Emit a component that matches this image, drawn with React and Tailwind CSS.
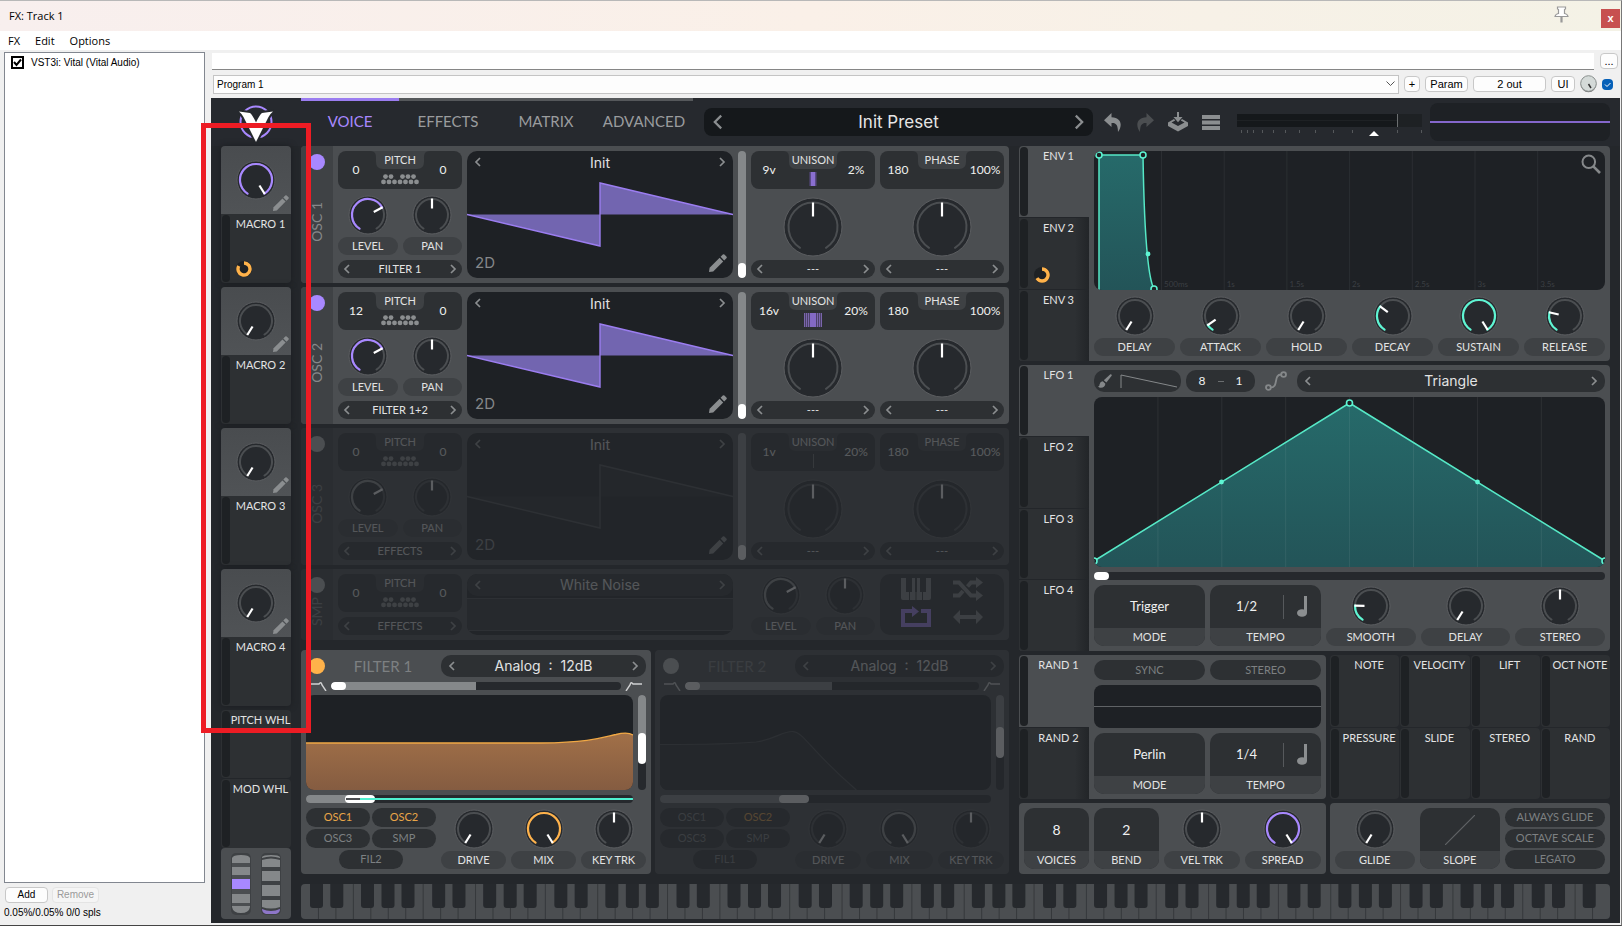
import React from "react";

const PURPLE = "#a888ff";
const TEAL = "#5ef5d3";
const ORANGE = "#ffb24a";

/* ---------- drawing helpers ---------- */

function polar(c, r, deg) {
  const a = (deg * Math.PI) / 180;
  return [c + r * Math.sin(a), c - r * Math.cos(a)];
}

function arc(c, r, from, to) {
  const [x1, y1] = polar(c, r, from);
  const [x2, y2] = polar(c, r, to);
  return `M${x1} ${y1}A${r} ${r} 0 ${to - from > 180 ? 1 : 0} 1 ${x2} ${y2}`;
}

function KnobFace({ value = 0, color, large }) {
  const size = large ? 60 : 40;
  const c = size / 2;
  const r = large ? 24.5 : 16;
  const angle = -148 + 296 * value;
  const [x1, y1] = polar(c, large ? 10.5 : 6.5, angle);
  const [x2, y2] = polar(c, large ? 24.5 : 16.5, angle);
  return (
    <svg width={size} height={size} viewBox={`0 0 ${size} ${size}`} className="shrink-0">
      <circle cx={c} cy={c} r={large ? 29 : 19} fill="#26292d" stroke="#5b5d60" strokeWidth="1" />
      <path d={arc(c, r, -148, 148)} fill="none" stroke="#4b4e51" strokeWidth="2" strokeLinecap="round" />
      {color && value > 0 && (
        <path d={arc(c, r, -148, angle)} fill="none" stroke={color} strokeWidth="2.2" strokeLinecap="round" />
      )}
      <path d={`M${x1} ${y1}L${x2} ${y2}`} stroke="#fff" strokeWidth="2.2" />
    </svg>
  );
}

function Pencil({ size = 18 }) {
  return (
    <svg width={size} height={size} viewBox="0 0 18 18" fill="#8b8e90">
      <path d="M0 18L.6 13.8 10.6 3.8 14.2 7.4 4.2 17.4Z" />
      <path d="M11.6 2.8L13.8.6Q14.6-.2 15.4.6L17.4 2.6Q18.2 3.4 17.4 4.2L15.2 6.4Z" />
    </svg>
  );
}

function Chevron({ dir, big }) {
  const s = big ? 16 : 10;
  return (
    <svg width={s} height={s} viewBox="0 0 10 10" fill="none" stroke="#8b8e90" strokeWidth={big ? 1.4 : 1.7}>
      <path d={dir === "left" ? "M7 1L3 5L7 9" : "M3 1L7 5L3 9"} />
    </svg>
  );
}

function Ring({ sweep }) {
  return (
    <svg width="16" height="16" viewBox="0 0 16 16">
      <circle cx="8" cy="8" r="8" fill="#1e2124" />
      <path d={arc(8, 6, 0, sweep)} fill="none" stroke={ORANGE} strokeWidth="3.4" />
    </svg>
  );
}

function Note() {
  return (
    <svg width="11" height="21" viewBox="0 0 11 21" fill="#8b8e90">
      <ellipse cx="5" cy="17" rx="5" ry="3.8" />
      <path d="M7 0h3v17H7z" />
    </svg>
  );
}

function PianoDots() {
  const top = [4.5, 10, 21.5, 27, 32.5];
  const bottom = [2, 7.5, 13, 18.5, 24, 29.5, 35];
  return (
    <svg width="38" height="11" viewBox="0 0 38 11" fill="#8b8e90">
      {top.map((x) => (
        <circle key={x} cx={x} cy="2.6" r="2.4" />
      ))}
      {bottom.map((x) => (
        <circle key={x} cx={x + 0.5} cy="7.9" r="2.4" />
      ))}
    </svg>
  );
}

/* ---------- shared controls ---------- */

function Label({ children }) {
  return (
    <span className="flex h-[18px] w-full items-center justify-center whitespace-nowrap rounded-full bg-[#3e4144] pb-0.5 text-[11px] leading-none text-[#e2e3e3]">
      {children}
    </span>
  );
}

function Knob({ label, name, value, color }) {
  return (
    <label className="relative flex h-[61px] min-w-0 flex-1 flex-col items-center justify-between pt-px">
      <KnobFace value={value} color={color} />
      <input
        type="range"
        className="sr-only"
        min="0"
        max="100"
        defaultValue={Math.round(value * 100)}
        aria-label={name || label}
      />
      <Label>{label}</Label>
    </label>
  );
}

function Selector({ children, small, name }) {
  return (
    <div
      className={
        small
          ? "flex h-[18px] w-full items-center justify-between rounded-full bg-[#2d3033] px-1 text-[11px] leading-none text-[#e2e3e3]"
          : "flex h-[22px] w-full items-center justify-between rounded-[10px] bg-[#2d3033] px-1.5 text-[14px] leading-none text-[#e2e3e3] [font-family:Inter,sans-serif]"
      }
    >
      <button type="button" aria-label={`Previous ${name}`}>
        <Chevron dir="left" />
      </button>
      <span className={small ? "whitespace-pre pb-0.5" : "whitespace-pre"}>{children}</span>
      <button type="button" aria-label={`Next ${name}`}>
        <Chevron dir="right" />
      </button>
    </div>
  );
}

function SplitBox({ title, left, right, children }) {
  return (
    <div className="grid h-[38px] w-full grid-cols-[minmax(0,1fr)_60px_minmax(0,1fr)] overflow-hidden rounded-lg bg-[#2d3033]">
      <span className="flex items-center justify-center pl-1 text-[12px] text-[#f0f0f0]">{left}</span>
      <div className="grid justify-items-center">
        <svg width="60" height="18" viewBox="0 0 60 18" className="[grid-area:1/1]">
          <path d="M0 0H60C54 0 54 4 54 8V11Q54 18 47 18H13Q6 18 6 11V8C6 4 6 0 0 0Z" fill="#3e4144" />
        </svg>
        <div className="flex flex-col items-center [grid-area:1/1]">
          <span className="h-[18px] text-[11px] leading-[18px] text-[#e2e3e3]">{title}</span>
          <span className="flex h-5 items-center justify-center">{children}</span>
        </div>
      </div>
      <span className="flex items-center justify-center pr-1.5 text-[12px] text-[#f0f0f0]">{right}</span>
    </div>
  );
}

function ValueBox({ label, children }) {
  return (
    <div className="flex h-[61px] min-w-0 flex-1 flex-col overflow-hidden rounded-[10px] bg-[#2d3033]">
      <div className="flex flex-1 items-center justify-center text-[#f0f0f0]">{children}</div>
      <div className="flex h-[18px] items-center justify-center bg-[#3e4144] pb-0.5 text-[11px] leading-none text-[#e2e3e3]">
        {label}
      </div>
    </div>
  );
}

function TempoBox({ value }) {
  return (
    <ValueBox label="TEMPO">
      <span className="flex flex-1 justify-center text-[13px]">{value}</span>
      <span className="h-6 w-px bg-[#56595c]" />
      <span className="flex w-[37px] justify-center">
        <Note />
      </span>
    </ValueBox>
  );
}

function PowerDot({ on, color, name }) {
  return (
    <button
      type="button"
      aria-label={`${name} power`}
      className={`z-10 ml-2 mt-2 size-4 self-start justify-self-start rounded-full [grid-area:1/1] ${
        on ? color : "bg-[#4b4e51]"
      }`}
    />
  );
}

function Toggle({ children, on }) {
  return (
    <button
      type="button"
      aria-pressed={!!on}
      className={`flex h-[19px] w-full items-center justify-center rounded-full bg-[#2d3033] pb-0.5 text-[11px] leading-none ${
        on ? "text-[#e8a548]" : "text-[#7d8082]"
      }`}
    >
      {children}
    </button>
  );
}

/* ---------- header ---------- */

function Logo() {
  const v = "M1 6.5L12 8Q14 9 18 17.5Q22 9 24 8L35 6.5Q32 9 30.5 12L18 37L5.5 12Q4 9 1 6.5Z";
  return (
    <svg width="36" height="38" viewBox="0 0 36 38">
      <circle cx="18" cy="17" r="15.5" fill="none" stroke={PURPLE} strokeWidth="2" />
      <path d={v} fill="#fff" stroke="#26292e" strokeWidth="4" />
      <path d={v} fill="#fff" />
    </svg>
  );
}

function Header() {
  const ticks = [4, 10, 16, 25, 36, 48, 62, 78, 96, 115, 160, 184];
  const toolButton = "flex w-5 justify-center";
  return (
    <header className="flex h-12 items-center bg-[#26292e] pr-2.5">
      <div className="flex w-[90px] justify-center pt-1">
        <Logo />
      </div>
      <nav className="grid w-[392px] grid-cols-4 self-start text-[15px]">
        {["VOICE", "EFFECTS", "MATRIX", "ADVANCED"].map((t, i) => (
          <button
            type="button"
            key={t}
            className={`h-11 border-t-[3px] ${
              i === 0 ? "border-[#9b7df0] text-[#a888ff]" : "border-[#55585b] text-[#9a9c9e]"
            }`}
          >
            {t}
          </button>
        ))}
      </nav>
      <div className="ml-[11px] flex h-7 flex-1 items-center justify-between rounded-lg bg-[#15181b] px-1.5 text-[17px] text-[#e6e6e6] [font-family:Inter,sans-serif]">
        <button type="button" aria-label="Previous preset">
          <Chevron dir="left" big />
        </button>
        <span className="pt-0.5">Init Preset</span>
        <button type="button" aria-label="Next preset">
          <Chevron dir="right" big />
        </button>
      </div>
      <div className="ml-[9px] flex items-center gap-[13px]">
        <button type="button" aria-label="Undo" className={toolButton}>
          <svg width="17" height="19" viewBox="0 0 17 19" fill="#8b8e90">
            <path d="M7.5 0L0 7.3L7.5 14V10C12 9.6 14 12 14 19C18.5 13 18 4.8 7.5 4.2Z" />
          </svg>
        </button>
        <button type="button" aria-label="Redo" className={toolButton}>
          <svg width="17" height="19" viewBox="0 0 17 19" fill="#4b4e51">
            <path d="M9.5 0L17 7.3L9.5 14V10C5 9.6 3 12 3 19C-1.5 13-1 4.8 9.5 4.2Z" />
          </svg>
        </button>
        <button type="button" aria-label="Save preset" className={toolButton}>
          <svg width="20" height="20" viewBox="0 0 20 20" fill="#8b8e90">
            <path d="M9 0h2v5h3.5L10 10.2 5.5 5H9Z" />
            <path d="M6 7L0 10.5V14L10 19.6 20 14V10.5L14 7 12.8 8.6 16.5 10.6 10 14 3.5 10.6 7.2 8.6Z" />
          </svg>
        </button>
        <button type="button" aria-label="Menu" className={toolButton}>
          <svg width="18" height="15" viewBox="0 0 18 15" fill="#8b8e90">
            <path d="M0 0h18v4H0zM0 5.5h18v4H0zM0 11h18v4H0z" />
          </svg>
        </button>
      </div>
      <svg className="ml-4 mt-1.5" width="185" height="22" viewBox="0 0 185 22" role="img" aria-label="Output level">
        <path d="M0 0h185v13H0z" fill="#1e2124" />
        <path d="M0 0h160v6H0zM0 7h160v6H0z" fill="#15181b" />
        <path d="M160.5 0v13" stroke="#6b6e70" />
        {ticks.map((x) => (
          <path key={x} d={`M${x + 0.5} 16v3`} stroke="#55585b" />
        ))}
        <path d="M132 22L137 17 142 22Z" fill="#fff" />
      </svg>
      <div className="ml-2 flex h-[38px] w-[180px] items-center rounded-lg bg-[#1e2125]">
        <div className="h-0.5 w-full bg-[#8567cc]" />
      </div>
    </header>
  );
}

/* ---------- macros ---------- */

function SourceSlot({ name, ring, className = "" }) {
  return (
    <div className={`flex bg-[#2d3033] ${className}`}>
      <div className="my-px ml-px w-2 shrink-0 rounded-full bg-[#1e2124]" />
      <div className="flex min-w-0 flex-1 flex-col items-center justify-between">
        <span className="whitespace-nowrap text-[11px] leading-5 text-[#e2e3e3]">{name}</span>
        {ring && (
          <span className="mb-1.5 ml-1.5 self-start">
            <Ring sweep={ring} />
          </span>
        )}
      </div>
    </div>
  );
}

function Macro({ n, value, color, ring }) {
  return (
    <section className="flex h-[137px] flex-col overflow-hidden rounded shadow-[0_0_6px_#1b1d20]">
      <label className="relative flex h-[68px] items-center justify-center bg-linear-to-b from-[#494c4f] to-[#505356]">
        <KnobFace value={value} color={color} />
        <input type="range" className="sr-only" defaultValue={value * 100} aria-label={`Macro ${n}`} />
        <span className="absolute bottom-[3px] right-0.5">
          <Pencil size={16} />
        </span>
      </label>
      <SourceSlot name={`MACRO ${n}`} ring={ring} className="flex-1" />
    </section>
  );
}

function Wheels() {
  return (
    <div className="flex h-[71px] items-center justify-center gap-2.5 rounded bg-[#4b4e51]">
      <svg width="20" height="62" viewBox="0 0 20 62">
        <rect width="20" height="62" rx="5" fill="#3e4144" />
        <path
          d="M1 5Q2 2 10 2Q18 2 19 5V10H1ZM1 14H19V22H1ZM1 41H19V50H1ZM1 53H19V54Q18 60 10 60Q2 60 1 54Z"
          fill="#85888a"
        />
        <path d="M1 10H19V14H1ZM1 22H19V26H1ZM1 35H19V41H1ZM1 50H19V53H1Z" fill="#4b4e51" />
        <path d="M1 26H19V36H1Z" fill={PURPLE} />
      </svg>
      <svg width="20" height="62" viewBox="0 0 20 62">
        <rect width="20" height="62" rx="5" fill="#3e4144" />
        <path
          d="M1 4Q2 2 10 2Q18 2 19 4V5Q10 2 1 5ZM1 7Q10 4 19 7V14H1ZM1 18H19V28H1ZM1 32H19V43H1ZM1 47H19V54Q10 57 1 54Z"
          fill="#85888a"
        />
        <path d="M1 56Q10 60 19 56Q19 60 15 61H5Q1 60 1 56Z" fill="#8d76c8" />
      </svg>
    </div>
  );
}

/* ---------- oscillators ---------- */

function SideTitle({ children }) {
  return (
    <div className="flex w-8 items-center justify-center rounded-l bg-[#3f4245] pt-[15px]">
      <span className="rotate-180 text-[14px] leading-none text-[#85888a] [writing-mode:vertical-rl]">{children}</span>
    </div>
  );
}

function UnisonBars({ voices }) {
  if (voices === "9v") {
    return (
      <svg width="18" height="14" viewBox="0 0 18 14">
        <path d="M5.5 0h7v14h-7z" fill="#5a4a86" />
        <path d="M7 0h4v14h-4z" fill="#8a6fd0" />
      </svg>
    );
  }
  if (voices === "16v") {
    return (
      <svg width="18" height="14" viewBox="0 0 18 14">
        <path d="M0 0h18v14H0z" fill="#4b4069" />
        <path d="M0 0h1v14H0zM2 0h1v14H2zM4 0h1v14H4zM13 0h1v14h-1zM15 0h1v14h-1zM17 0h1v14h-1z" fill="#7a66ac" />
        <path d="M6 0h6v14H6z" fill="#8369c4" />
      </svg>
    );
  }
  return <span className="h-3.5 w-px bg-[#6b6e70]" />;
}

function Wave({ on }) {
  return (
    <div className="grid h-[127px] min-w-0 flex-1 overflow-hidden rounded-[10px] bg-[#1e2125]">
      <svg className="h-full w-full [grid-area:1/1]" viewBox="0 0 266 127" preserveAspectRatio="none">
        <path d="M0 63.5H266L133 32V95Z" fill={on ? "#7265b0" : "#25282c"} />
        <path d="M0 63.5L133 95V32L266 63.5" fill="none" stroke={on ? "#9b7df0" : "#4b4e51"} strokeWidth="1.4" />
      </svg>
      <div className="z-10 flex flex-col justify-between [grid-area:1/1]">
        <div className="flex h-[22px] items-center justify-between px-1.5 text-[14px] text-[#e2e3e3] [font-family:Inter,sans-serif]">
          <button type="button" aria-label="Previous wavetable">
            <Chevron dir="left" />
          </button>
          <span>Init</span>
          <button type="button" aria-label="Next wavetable">
            <Chevron dir="right" />
          </button>
        </div>
        <div className="flex items-end justify-between px-1.5 pb-1.5">
          <span className="pl-0.5 text-[15px] leading-[18px] text-[#85888a] [font-family:Inter,sans-serif]">2D</span>
          <Pencil size={18} />
        </div>
      </div>
    </div>
  );
}

function UnisonColumn({ title, left, right, name, children }) {
  return (
    <div className="flex w-[124px] flex-col justify-between">
      <SplitBox title={title} left={left} right={right}>
        {children}
      </SplitBox>
      <label className="relative flex justify-center pt-1">
        <KnobFace value={0.5} large />
        <input type="range" className="sr-only" defaultValue={50} aria-label={name} />
      </label>
      <Selector small name={name}>
        ---
      </Selector>
    </div>
  );
}

function Osc({ n, on, pitch, route, voices, detune }) {
  return (
    <section className="grid h-[137px]">
      <div className={`flex min-w-0 gap-[5px] rounded bg-[#4b4e51] pr-[5px] [grid-area:1/1] ${on ? "" : "opacity-25"}`}>
        <SideTitle>{`OSC ${n}`}</SideTitle>
        <div className="flex min-w-0 flex-1 gap-[5px] py-[5px]">
          <div className="flex w-[124px] shrink-0 flex-col gap-[5px]">
            <SplitBox title="PITCH" left={pitch} right="0">
              <PianoDots />
            </SplitBox>
            <div className="flex gap-[5px]">
              <Knob label="LEVEL" name={`Oscillator ${n} level`} value={0.71} color={on ? PURPLE : "#8b8e90"} />
              <Knob label="PAN" name={`Oscillator ${n} pan`} value={0.5} />
            </div>
            <Selector small name="routing">
              {route}
            </Selector>
          </div>
          <Wave on={on} />
          <label className="relative flex w-2 flex-col justify-end overflow-hidden rounded-full bg-[#85888a]">
            <span className="h-[15px] rounded-full bg-white" />
            <input type="range" className="sr-only" defaultValue={0} aria-label={`Oscillator ${n} wave frame`} />
          </label>
          <UnisonColumn title="UNISON" left={voices} right={detune} name="Spectral morph">
            <UnisonBars voices={voices} />
          </UnisonColumn>
          <UnisonColumn title="PHASE" left="180" right="100%" name="Wave distortion" />
        </div>
      </div>
      <PowerDot on={on} color="bg-[#a888ff]" name={`Oscillator ${n}`} />
    </section>
  );
}

function Sampler() {
  return (
    <section className="grid h-[71px]">
      <div className="flex min-w-0 gap-[5px] rounded bg-[#4b4e51] pr-[5px] opacity-25 [grid-area:1/1]">
        <SideTitle>SMP</SideTitle>
        <div className="flex min-w-0 flex-1 gap-[5px] py-[5px]">
          <div className="flex w-[124px] flex-col gap-[5px]">
            <SplitBox title="PITCH" left="0" right="0">
              <PianoDots />
            </SplitBox>
            <Selector small name="routing">
              EFFECTS
            </Selector>
          </div>
          <div className="flex min-w-0 flex-1 flex-col overflow-hidden rounded-[10px] bg-[#1e2125]">
            <Selector name="sample">White Noise</Selector>
            <div className="mt-0.5 mb-1 flex-1 border-y border-[#4b4e51] bg-[#2d3033]" />
          </div>
          <div className="ml-[13px] flex w-[124px] gap-[5px]">
            <Knob label="LEVEL" name="Sampler level" value={0.71} color="#8b8e90" />
            <Knob label="PAN" name="Sampler pan" value={0.5} />
          </div>
          <div className="grid w-[124px] grid-cols-2 place-items-center rounded-[10px] bg-[#2d3033] px-2.5 pb-1">
            <button type="button" aria-label="Keytrack">
              <svg width="30" height="22" viewBox="0 0 30 22" fill="#85888a">
                <path d="M0 0H5V14H8V22H2Q0 22 0 20ZM9 22V14H11V0H14V14H16V0H19V14H21V22H15.500V14H14.500V22ZM25 0H30V20Q30 22 28 22H22V14H25Z" />
              </svg>
            </button>
            <button type="button" aria-label="Random phase">
              <svg width="30" height="24" viewBox="0 0 30 24" fill="none" stroke="#85888a" strokeWidth="4">
                <path d="M0 5.5H6L18 18.5H24M0 18.5H6L10 14M14.5 9.5L18 5.5H24" />
                <path d="M23 0L30 5.5 23 11ZM23 13L30 18.5 23 24Z" fill="#85888a" stroke="none" />
              </svg>
            </button>
            <button type="button" aria-label="Loop">
              <svg width="30" height="22" viewBox="0 0 30 22" fill="none" stroke={PURPLE} strokeWidth="4">
                <path d="M20 5H28V19H2V5H12" />
                <path d="M11 0L18 5.5 11 11Z" fill={PURPLE} stroke="none" />
              </svg>
            </button>
            <button type="button" aria-label="Bounce">
              <svg width="30" height="14" viewBox="0 0 30 14" fill="#85888a">
                <path d="M0 7L7 0V5H23V0L30 7L23 14V9H7V14Z" />
              </svg>
            </button>
          </div>
        </div>
      </div>
      <PowerDot name="Sampler" />
    </section>
  );
}

/* ---------- filters ---------- */

function Filter({ n, on, other }) {
  return (
    <section className={`grid h-[224px] min-w-0 ${on ? "flex-[350]" : "flex-[354]"}`}>
      <div
        className={`flex min-w-0 flex-col gap-[5px] rounded bg-[#4b4e51] p-[5px] [grid-area:1/1] ${on ? "" : "opacity-25"}`}
      >
        <div className="flex h-[22px] gap-[5px]">
          <span className="w-[130px] shrink-0 pl-6 text-center text-[15px] leading-[22px] text-[#7d8082]">{`FILTER ${n}`}</span>
          <Selector name="filter model">{"Analog  :  12dB"}</Selector>
        </div>
        <div className="flex h-2 items-center gap-1 px-1">
          <svg width="17" height="9" viewBox="0 0 17 9" fill="none" stroke="#d0d1d2" strokeWidth="1.4">
            <path d="M0 2H9Q11 -1 12 3L16 9" />
          </svg>
          <label className="relative flex h-2 flex-1 overflow-hidden rounded-full bg-[#26292d]">
            <span className="h-2 w-1/2 bg-[#85888a]">
              <span className="block h-2 w-[15px] rounded-full bg-white" />
            </span>
            <input type="range" className="sr-only" defaultValue={0} aria-label={`Filter ${n} blend`} />
          </label>
          <svg width="17" height="9" viewBox="0 0 17 9" fill="none" stroke="#d0d1d2" strokeWidth="1.4">
            <path d="M17 2H8Q6 -1 5 3L1 9" />
          </svg>
        </div>
        <div className="flex h-[95px] gap-[5px]">
          <svg
            className="h-full min-w-0 flex-1 rounded-lg bg-[#1e2125]"
            viewBox="0 0 327 95"
            preserveAspectRatio="none"
            role="img"
            aria-label={`Filter ${n} response`}
          >
            <defs>
              <linearGradient id="response" x1="0" y1="0" x2="0" y2="1">
                <stop offset="0" stopColor="#a17048" />
                <stop offset="1" stopColor="#855c41" />
              </linearGradient>
            </defs>
            {on ? (
              <>
                <path d="M0 48H235C285 47.5 298 42 310 39.5C318 37.5 323 37.5 327 40V95H0Z" fill="url(#response)" />
                <path d="M0 48H235C285 47.5 298 42 310 39.5C318 37.5 323 37.5 327 40" fill="none" stroke="#f0a845" strokeWidth="1.4" />
              </>
            ) : (
              <>
                <path d="M0 49.5C40 49.5 80 48.5 95 47C115 44 121 36 131 36.5C142 37 148 55 194 95H0Z" fill="#25282c" />
                <path d="M0 49.5C40 49.5 80 48.5 95 47C115 44 121 36 131 36.5C142 37 148 55 194 95" fill="none" stroke="#45484b" strokeWidth="1.2" />
              </>
            )}
          </svg>
          <label className="relative flex w-2 flex-col overflow-hidden rounded-full bg-[#26292d]">
            <span className={`bg-[#85888a] ${on ? "h-[42px]" : "h-9"}`} />
            <span className="-mt-1 h-[31px] rounded-full bg-white" />
            <input type="range" className="sr-only" defaultValue={45} aria-label={`Filter ${n} resonance`} />
          </label>
        </div>
        <label className="relative mr-[13px] grid h-2 overflow-hidden rounded-full bg-[#26292d]">
          <span className="flex [grid-area:1/1]">
            <span className={`h-2 bg-[#85888a] ${on ? "w-[43px]" : "w-[123px]"}`} />
            <span className="-ml-1 h-2 w-[30px] rounded-full bg-white" />
          </span>
          {on && (
            <span className="z-10 flex items-center [grid-area:1/1]">
              <span className="ml-10 h-0.5 w-3.5 bg-[#4b4e51]" />
              <span className="h-0.5 flex-1 bg-[#4ff0d0]" />
            </span>
          )}
          <input type="range" className="sr-only" defaultValue={on ? 15 : 40} aria-label={`Filter ${n} cutoff`} />
        </label>
        <div className="flex gap-[5px]">
          <div className="flex w-[130px] shrink-0 flex-col gap-0.5">
            <div className="flex gap-0.5">
              <Toggle on={on}>OSC1</Toggle>
              <Toggle on>OSC2</Toggle>
            </div>
            <div className="flex gap-0.5">
              <Toggle>OSC3</Toggle>
              <Toggle>SMP</Toggle>
            </div>
            <div className="flex w-16 self-center">
              <Toggle>{`FIL${other}`}</Toggle>
            </div>
          </div>
          <Knob label="DRIVE" value={0} />
          <Knob label="MIX" value={1} color={on ? ORANGE : "#8b8e90"} />
          <Knob label="KEY TRK" value={0.5} />
        </div>
      </div>
      <PowerDot on={on} color="bg-[#ffb24a]" name={`Filter ${n}`} />
    </section>
  );
}

/* ---------- modulators ---------- */

function ModTabs({ names, rings = {} }) {
  return (
    <div className="flex w-[70px] shrink-0 flex-col">
      {names.map((n, i) =>
        i === 0 ? (
          <div key={n} className="flex min-h-0 flex-1">
            <div className="my-px ml-px w-2 shrink-0 rounded-full bg-[#1e2124]" />
            <span className="flex-1 text-center text-[11px] leading-5 text-[#e2e3e3]">{n}</span>
          </div>
        ) : (
          <SourceSlot
            key={n}
            name={n}
            ring={rings[n]}
            className="min-h-0 flex-1 border-t border-[#23262a] bg-linear-to-r from-[#2d3033] from-80% to-[#222528]"
          />
        )
      )}
    </div>
  );
}

function Envelope() {
  const marks = ["500ms", "1s", "1.5s", "2s", "2.5s", "3s", "3.5s"];
  return (
    <section className="flex h-[215px] overflow-hidden rounded bg-[#4b4e51]">
      <ModTabs names={["ENV 1", "ENV 2", "ENV 3"]} rings={{ "ENV 2": 238 }} />
      <div className="flex min-w-0 flex-1 flex-col gap-[5px] p-[5px]">
        <div className="grid h-[139px] overflow-hidden rounded-lg bg-[#1e2125]">
          <svg className="h-[139px] w-full [grid-area:1/1]" viewBox="0 0 511 139" preserveAspectRatio="none">
            <defs>
              <linearGradient id="env" x1="0" y1="0" x2="0" y2="1">
                <stop offset="0" stopColor="#266a6a" />
                <stop offset="1" stopColor="#235458" />
              </linearGradient>
            </defs>
            {marks.map((m, i) => (
              <g key={m}>
                <path d={`M${67.5 + i * 62.7} 0V139`} stroke="#2b2e32" />
                <text x={70 + i * 62.7} y="136" fontSize="8" fill="#3b3f43">
                  {m}
                </text>
              </g>
            ))}
            <path d="M5 4H49C50 70 53 125 60 138V139H5Z" fill="url(#env)" />
            <path d="M5 139V4H49C50 70 53 125 60 138" fill="none" stroke="#56e8c6" strokeWidth="1.5" />
            <g fill="#1e2125" stroke={TEAL} strokeWidth="1.5">
              <circle cx="5" cy="4" r="3" />
              <circle cx="49" cy="4" r="3" />
              <circle cx="60" cy="138" r="3" />
            </g>
            <circle cx="54" cy="103" r="2.4" fill={TEAL} />
          </svg>
          <button type="button" aria-label="Zoom" className="z-10 mr-1 mt-[3px] self-start justify-self-end [grid-area:1/1]">
            <svg width="20" height="20" viewBox="0 0 20 20" fill="none" stroke="#85888a" strokeWidth="2">
              <circle cx="7.8" cy="7.8" r="6.3" />
              <path d="M12.3 12.3L19 19" strokeWidth="2.6" />
            </svg>
          </button>
        </div>
        <div className="flex gap-[5px]">
          <Knob label="DELAY" value={0} />
          <Knob label="ATTACK" value={0.08} color={TEAL} />
          <Knob label="HOLD" value={0} />
          <Knob label="DECAY" value={0.32} color={TEAL} />
          <Knob label="SUSTAIN" value={1} color={TEAL} />
          <Knob label="RELEASE" value={0.24} color={TEAL} />
        </div>
      </div>
    </section>
  );
}

function Lfo() {
  return (
    <section className="flex h-[286px] overflow-hidden rounded bg-[#4b4e51]">
      <ModTabs names={["LFO 1", "LFO 2", "LFO 3", "LFO 4"]} />
      <div className="flex min-w-0 flex-1 flex-col gap-[5px] p-[5px]">
        <div className="flex h-[22px] gap-[5px]">
          <button
            type="button"
            aria-label="Paint pattern"
            className="flex w-[87px] items-center gap-2 rounded-[10px] bg-[#2d3033] px-1"
          >
            <svg width="14" height="14" viewBox="0 0 14 14" fill="#85888a">
              <path d="M12.4.2Q13.8 0 13.8 1.6L8.4 8.6 5.8 6.2Z" />
              <path d="M4.8 7.2L7.4 9.8Q6.8 13.6 2.8 13.8 1 13.8 0 12.6 1.6 12.4 1.6 10.2 2.2 7.4 4.8 7.2Z" />
            </svg>
            <svg width="57" height="14" viewBox="0 0 57 14" fill="none" stroke="#85888a">
              <path d="M1 14V1L57 13" />
            </svg>
          </button>
          <div className="flex w-[69px] items-center justify-center gap-3 rounded-[10px] bg-[#2d3033] text-[12px] text-[#f0f0f0]">
            <span>8</span>
            <span className="h-px w-1.5 bg-[#6b6e70]" />
            <span>1</span>
          </div>
          <button type="button" aria-label="Smooth curves" className="flex w-8 items-center justify-center">
            <svg width="22" height="20" viewBox="0 0 22 20" fill="none" stroke="#85888a" strokeWidth="1.8">
              <circle cx="3.4" cy="16.5" r="2.4" />
              <circle cx="18.6" cy="3.5" r="2.4" />
              <path d="M5.8 16.5C14 16.5 8 3.5 16.2 3.5" />
            </svg>
          </button>
          <div className="min-w-0 flex-1">
            <Selector name="LFO shape">Triangle</Selector>
          </div>
        </div>
        <svg className="h-[170px] w-full rounded-lg bg-[#1e2125]" viewBox="0 0 511 170" preserveAspectRatio="none">
          <defs>
            <linearGradient id="lfo" x1="0" y1="0" x2="0" y2="1">
              <stop offset="0" stopColor="#266a6a" />
              <stop offset="1" stopColor="#235458" />
            </linearGradient>
          </defs>
          <path d="M0 164L255.5 6L511 164V170H0Z" fill="url(#lfo)" />
          {[1, 2, 3, 4, 5, 6, 7].map((i) => (
            <path key={i} d={`M${i * 63.9} 0V170`} stroke="#fff" strokeOpacity=".07" />
          ))}
          <path d="M0 164L255.5 6L511 164" fill="none" stroke="#56e8c6" strokeWidth="1.5" />
          <g fill="#1e2125" stroke={TEAL} strokeWidth="1.6">
            <circle cx="0" cy="164" r="3" />
            <circle cx="255.5" cy="6" r="3" />
            <circle cx="511" cy="164" r="3" />
          </g>
          <circle cx="127.5" cy="85" r="2.4" fill={TEAL} />
          <circle cx="383.5" cy="85" r="2.4" fill={TEAL} />
        </svg>
        <label className="relative block h-2 rounded-full bg-[#26292d]">
          <span className="block h-2 w-[15px] rounded-full bg-white" />
          <input type="range" className="sr-only" defaultValue={0} aria-label="LFO phase" />
        </label>
        <div className="flex gap-[5px]">
          <div className="flex flex-[227] gap-[5px]">
            <ValueBox label="MODE">
              <span className="text-[13px]">Trigger</span>
            </ValueBox>
            <TempoBox value="1/2" />
          </div>
          <div className="flex flex-[279] gap-[5px]">
            <Knob label="SMOOTH" value={0.2} color={TEAL} />
            <Knob label="DELAY" value={0} />
            <Knob label="STEREO" value={0.5} />
          </div>
        </div>
      </div>
    </section>
  );
}

function RandomSource() {
  return (
    <section className="flex h-36 min-w-0 flex-[307] overflow-hidden rounded bg-[#4b4e51]">
      <ModTabs names={["RAND 1", "RAND 2"]} />
      <div className="flex min-w-0 flex-1 flex-col gap-[5px] p-[5px]">
        <div className="flex gap-[5px] text-[11px] text-[#7d8082]">
          <button type="button" className="h-5 flex-1 rounded-full bg-[#2d3033]">
            SYNC
          </button>
          <button type="button" className="h-5 flex-1 rounded-full bg-[#2d3033]">
            STEREO
          </button>
        </div>
        <div className="flex h-[43px] items-center rounded-lg bg-[#1e2125]">
          <div className="h-px w-full bg-[#606366]" />
        </div>
        <div className="flex gap-[5px]">
          <ValueBox label="MODE">
            <span className="text-[13px]">Perlin</span>
          </ValueBox>
          <TempoBox value="1/4" />
        </div>
      </div>
    </section>
  );
}

function NoteSources() {
  const names = ["NOTE", "VELOCITY", "LIFT", "OCT NOTE", "PRESSURE", "SLIDE", "STEREO", "RAND"];
  return (
    <section className="grid h-36 min-w-0 flex-[280] grid-cols-4 gap-px">
      {names.map((n) => (
        <SourceSlot key={n} name={n} className="min-w-0 rounded-sm" />
      ))}
    </section>
  );
}

function VoiceSettings() {
  return (
    <section className="flex h-[71px] min-w-0 flex-[307] gap-[5px] rounded bg-[#4b4e51] p-[5px]">
      <div className="flex flex-[135] gap-[5px]">
        <ValueBox label="VOICES">
          <span className="text-[14px]">8</span>
        </ValueBox>
        <ValueBox label="BEND">
          <span className="text-[14px]">2</span>
        </ValueBox>
      </div>
      <div className="flex flex-[157] gap-[5px]">
        <Knob label="VEL TRK" value={0.5} />
        <Knob label="SPREAD" value={1} color={PURPLE} />
      </div>
    </section>
  );
}

function GlideSettings() {
  return (
    <section className="flex h-[71px] min-w-0 flex-[280] gap-[5px] rounded bg-[#4b4e51] p-[5px]">
      <div className="flex flex-[165] gap-[5px]">
        <Knob label="GLIDE" value={0} />
        <ValueBox label="SLOPE">
          <svg width="30" height="30" viewBox="0 0 30 30" stroke="#606366" strokeWidth="1.2">
            <path d="M0 30L30 0" />
          </svg>
        </ValueBox>
      </div>
      <div className="flex flex-[100] flex-col gap-0.5">
        <Toggle>ALWAYS GLIDE</Toggle>
        <Toggle>OCTAVE SCALE</Toggle>
        <Toggle>LEGATO</Toggle>
      </div>
    </section>
  );
}

function Keyboard() {
  const white = 1309 / 75;
  const offsets = [9, 29.3, 60, 80.5, 100.5];
  const blacks = [];
  for (let o = 0; o < 11; o++) {
    offsets.forEach((x, i) => {
      if (o < 10 || i < 3) blacks.push(o * white * 7 + x);
    });
  }
  return (
    <svg className="h-[35px] w-full rounded" viewBox="0 0 1309 35" preserveAspectRatio="none" role="img" aria-label="Keyboard">
      <path d="M0 0H1309V35H0Z" fill="#4b4e51" />
      {Array.from({ length: 74 }, (_, i) => (
        <rect key={i} x={(i + 1) * white - 0.5} y="0" width="1" height="35" fill="#36393c" />
      ))}
      {blacks.map((x) => (
        <path key={x} d={`M${x} 0h13v21q0 3-3 3h-7q-3 0-3-3Z`} fill="#26292d" />
      ))}
    </svg>
  );
}

/* ---------- synth and host window ---------- */

function Synth() {
  return (
    <div className="relative mr-px bg-[#24272b] text-[#e2e3e3] [font-family:Lato,sans-serif]">
      <Header />
      <div className="flex gap-2.5 px-2.5 pb-1">
        <div className="flex w-[70px] shrink-0 flex-col gap-1">
          <Macro n={1} value={1} color={PURPLE} ring={300} />
          <Macro n={2} value={0} />
          <Macro n={3} value={0} />
          <Macro n={4} value={0} />
          <div className="flex flex-col">
            <SourceSlot name="PITCH WHL" className="h-[69px] rounded border-b border-[#23262a]" />
            <SourceSlot name="MOD WHL" className="h-[69px] rounded" />
            <Wheels />
          </div>
        </div>
        <div className="flex min-w-0 flex-1 flex-col gap-2.5">
          <div className="flex gap-2.5">
            <div className="flex min-w-0 flex-[708] flex-col gap-1">
              <Osc n={1} on pitch="0" route="FILTER 1" voices="9v" detune="2%" />
              <Osc n={2} on pitch="12" route="FILTER 1+2" voices="16v" detune="20%" />
              <Osc n={3} pitch="0" route="EFFECTS" voices="1v" detune="20%" />
              <Sampler />
              <div className="mt-1.5 flex gap-1">
                <Filter n={1} on other={2} />
                <Filter n={2} other={1} />
              </div>
            </div>
            <div className="flex min-w-0 flex-[591] flex-col gap-1">
              <Envelope />
              <Lfo />
              <div className="flex gap-1">
                <RandomSource />
                <NoteSources />
              </div>
              <div className="flex gap-1">
                <VoiceSettings />
                <GlideSettings />
              </div>
            </div>
          </div>
          <Keyboard />
        </div>
      </div>
      <div className="pointer-events-none absolute -left-2.5 top-[25px] z-20 h-[610px] w-[110px] border-[5px] border-[#ed1c24]" />
    </div>
  );
}

const hostButton = "h-4 rounded border border-[#c8c8c8] bg-[#fdfdfd] text-[11px] leading-none text-black";

export default function App() {
  return (
    <div className="flex min-h-screen flex-col border-b border-r border-t border-b-[#444] border-r-[#777] border-t-[#b8b8b8] bg-[#f0f0f0] text-black [font-family:'Liberation_Sans',Arial,sans-serif]">
      <div className="flex h-[30px] items-center justify-between bg-linear-to-r from-[#f8efee] via-[#faf0e8] to-[#f4f2e6] pl-[9px]">
        <h1 className="text-[11px] [font-family:'Open_Sans',sans-serif]">FX: Track 1</h1>
        <div className="flex items-center gap-8 pt-1">
          <button type="button" aria-label="Pin window" className="mb-2">
            <svg width="15" height="17" viewBox="0 0 15 17" fill="#fff" stroke="#999" strokeWidth="1.2">
              <path d="M3.5 1H11.5V3L10.5 3.5V7.5Q13.5 8 14 10.5H1Q1.5 8 4.5 7.5V3.5L3.5 3ZM7 10.5H8V16H7Z" />
            </svg>
          </button>
          <button
            type="button"
            aria-label="Close"
            className="mr-px h-[19px] w-[19px] bg-[#c75050] text-[11px] font-bold leading-none text-white"
          >
            x
          </button>
        </div>
      </div>
      <nav className="flex h-[19px] items-center gap-[15px] bg-white pl-2 pt-0.5 text-[11px] [font-family:'Open_Sans',sans-serif]">
        <a href="#fx">FX</a>
        <a href="#edit">Edit</a>
        <a href="#options">Options</a>
      </nav>
      <div className="flex flex-1 pt-0.5">
        <aside className="flex w-[211px] shrink-0 flex-col pl-1 pr-1.5">
          <div className="flex-1 border border-[#828790] bg-white">
            <label className="flex items-center gap-[7px] px-1.5 pt-[3px] text-[10px] leading-[13px]">
              <span className="grid size-[13px]">
                <input
                  type="checkbox"
                  defaultChecked
                  className="size-[13px] appearance-none border-2 border-black bg-white [grid-area:1/1]"
                />
                <svg className="pointer-events-none [grid-area:1/1]" width="13" height="13" viewBox="0 0 13 13" fill="none" stroke="#000" strokeWidth="2">
                  <path d="M3 6L5.5 9L10 3.5" />
                </svg>
              </span>
              VST3i: Vital (Vital Audio)
            </label>
          </div>
          <div className="flex gap-1 pl-px pt-1 text-[10px]">
            <button type="button" className="h-4 w-[43px] rounded border border-[#c8c8c8] bg-[#fdfdfd] leading-none">
              Add
            </button>
            <button
              type="button"
              disabled
              className="h-4 w-[47px] rounded border border-[#e4e4e4] bg-[#f5f5f5] leading-none text-[#9a9a9a]"
            >
              Remove
            </button>
          </div>
          <p className="mt-0.5 h-5 text-[10px] leading-4">0.05%/0.05% 0/0 spls</p>
        </aside>
        <main className="flex min-w-0 flex-1 flex-col">
          <div className="flex h-[18px] items-center gap-1.5 pl-px pr-[3px]">
            <input
              type="text"
              aria-label="Comment"
              className="h-[17px] min-w-0 flex-1 border-b border-[#868686] bg-white px-1 text-[10px] outline-none"
            />
            <button type="button" aria-label="More" className={`${hostButton} w-[18px]`}>
              ...
            </button>
          </div>
          <div className="flex h-7 items-center gap-[5px] pl-0.5 pr-2">
            <div className="grid h-[19px] min-w-0 flex-1">
              <select
                aria-label="Program"
                className="h-[19px] w-full appearance-none border border-[#c4c4c4] bg-[#fdfdfd] pl-[3px] text-[10px] [grid-area:1/1]"
              >
                <option>Program 1</option>
              </select>
              <svg className="pointer-events-none mr-1 self-center justify-self-end [grid-area:1/1]" width="9" height="6" viewBox="0 0 9 6" fill="none" stroke="#555">
                <path d="M.5.5L4.5 4.5L8.5.5" />
              </svg>
            </div>
            <button type="button" className={`${hostButton} w-4`}>
              +
            </button>
            <button type="button" className={`${hostButton} w-[43px]`}>
              Param
            </button>
            <button type="button" className={`${hostButton} w-[73px]`}>
              2 out
            </button>
            <button type="button" className={`${hostButton} w-6`}>
              UI
            </button>
            <label className="relative">
              <svg width="17" height="18" viewBox="0 0 17 18">
                <circle cx="8.5" cy="9.5" r="7.8" fill="#777" />
                <circle cx="8.5" cy="8.5" r="7.8" fill="#d4dad8" stroke="#8a908e" />
                <path d="M8.5 9L11 13" stroke="#333" strokeWidth="1.5" />
              </svg>
              <input type="range" className="sr-only" defaultValue={100} aria-label="Wet mix" />
            </label>
            <label className="grid size-[11px]">
              <input
                type="checkbox"
                defaultChecked
                aria-label="Enable effect"
                className="size-[11px] appearance-none rounded-sm bg-[#0560b8] [grid-area:1/1]"
              />
              <svg className="pointer-events-none [grid-area:1/1]" width="11" height="11" viewBox="0 0 11 11" fill="none" stroke="#fff">
                <path d="M3 5.5L5 7.5L8.5 4" />
              </svg>
            </label>
          </div>
          <Synth />
        </main>
      </div>
    </div>
  );
}
